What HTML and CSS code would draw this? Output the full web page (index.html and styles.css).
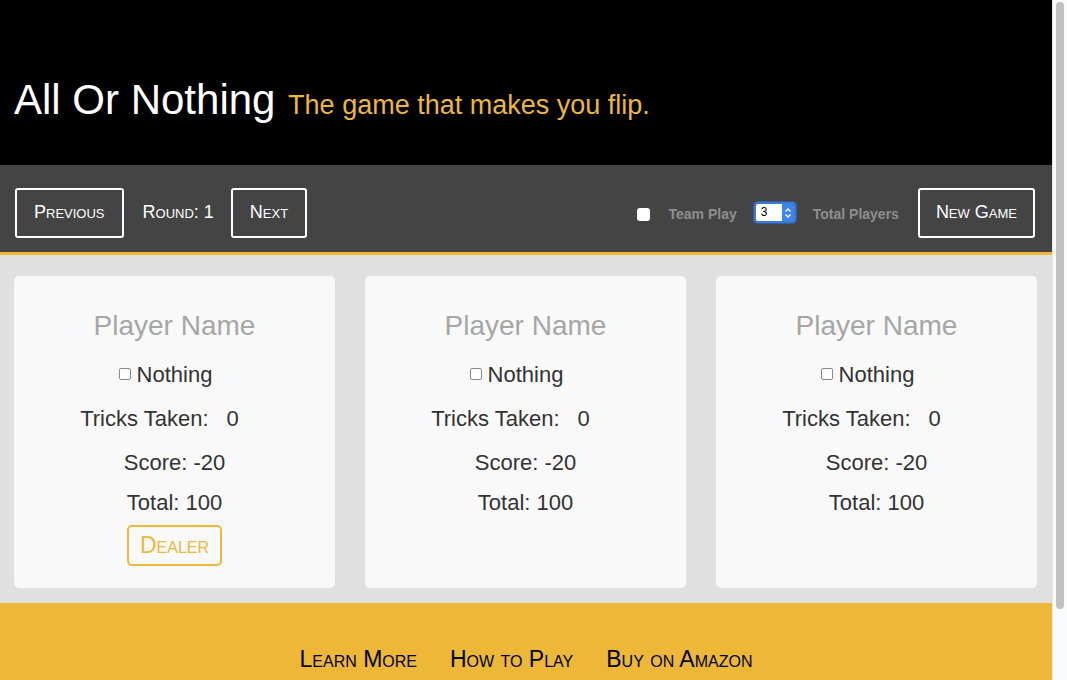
FILE: index.html
```html
<!DOCTYPE html>
<html>
<head>
<meta charset="utf-8">
<title>All Or Nothing</title>
<link rel="stylesheet" href="styles.css">
</head>
<body>
<div class="page">
<header class="hero">
  <h1 class="title">All Or Nothing <span class="tagline">The game that makes you flip.</span></h1>
</header>
<nav class="toolbar">
  <div class="round-nav">
    <button class="btn">Previous</button>
    <span class="round">Round: 1</span>
    <button class="btn">Next</button>
  </div>
  <div class="options">
    <span class="check-white"></span>
    <span class="opt-label team">Team Play</span>
    <span class="num-input"><span class="num-val">3</span><span class="stepper"><svg width="8" height="12" viewBox="0 0 8 12"><path d="M1.5 4.5 L4 2 L6.5 4.5 M1.5 7.5 L4 10 L6.5 7.5" fill="none" stroke="#fff" stroke-width="1.3"/></svg></span></span>
    <span class="opt-label">Total Players</span>
    <button class="btn btn-new">New Game</button>
  </div>
</nav>
<main class="board">
  <section class="card">
    <div class="name">Player Name</div>
    <div class="nothing"><span class="check-small"></span>Nothing</div>
    <div class="tricks">Tricks Taken: <span class="tricks-val">0</span></div>
    <div class="stat">Score: -20</div>
    <div class="stat total">Total: 100</div>
    <div class="dealer-row"><span class="dealer">Dealer</span></div>
  </section>
  <section class="card">
    <div class="name">Player Name</div>
    <div class="nothing"><span class="check-small"></span>Nothing</div>
    <div class="tricks">Tricks Taken: <span class="tricks-val">0</span></div>
    <div class="stat">Score: -20</div>
    <div class="stat total">Total: 100</div>
  </section>
  <section class="card">
    <div class="name">Player Name</div>
    <div class="nothing"><span class="check-small"></span>Nothing</div>
    <div class="tricks">Tricks Taken: <span class="tricks-val">0</span></div>
    <div class="stat">Score: -20</div>
    <div class="stat total">Total: 100</div>
  </section>
</main>
<footer class="footer">
  <a class="flink">Learn More</a>
  <a class="flink">How to Play</a>
  <a class="flink">Buy on Amazon</a>
</footer>
</div>
<div class="scrollbar"><div class="thumb"></div></div>
</body>
</html>
```
FILE: styles.css
```css
html, body {
  margin: 0;
  padding: 0;
  height: 100%;
  overflow: hidden;
}
body {
  font-family: "Liberation Sans", Arial, Helvetica, sans-serif;
  background: #e0e0e0;
  display: flex;
}
.page {
  flex: 1;
  min-width: 0;
  height: 100vh;
  overflow: hidden;
}
.scrollbar {
  width: 15px;
  box-sizing: border-box;
  flex: none;
  height: 100vh;
  background: #fafafa;
  border-left: 1px solid #e8e8e8;
  padding: 2px 3px 0 3px;
}
.thumb {
  height: 607px;
  background: #c1c1c1;
  border-radius: 4px;
}
.hero {
  background: #000;
  height: 165px;
  box-sizing: border-box;
  display: flex;
  align-items: flex-end;
  padding: 0 14px 36px;
}
.title {
  margin: 0;
  font-weight: normal;
  font-size: 42px;
  line-height: 48px;
  color: #fff;
  white-space: nowrap;
}
.tagline {
  font-size: 27px;
  color: #edb837;
  margin-left: 1px;
}
.toolbar {
  background: #444;
  height: 90px;
  box-sizing: border-box;
  padding: 8px 17px 0 15px;
  border-bottom: 3px solid #edb837;
  display: flex;
  align-items: center;
  justify-content: space-between;
}
.round-nav, .options {
  display: flex;
  align-items: center;
}
.btn {
  font-family: "Liberation Sans", Arial, sans-serif;
  font-variant: small-caps;
  font-size: 18px;
  color: #fff;
  background: transparent;
  border: 2px solid #fff;
  border-radius: 3px;
  height: 50px;
  padding: 0 17px;
  cursor: pointer;
}
.round {
  color: #fff;
  font-variant: small-caps;
  font-size: 18px;
  margin: 0 17px 0 19px;
}
.check-white {
  width: 13px;
  height: 13px;
  background: #fff;
  border-radius: 3px;
  margin-top: 4px;
}
.opt-label {
  color: #8f8f8f;
  font-weight: bold;
  font-size: 14px;
  margin-left: 17px;
  margin-top: 2px;
}
.team {
  margin-left: 19px;
}
.num-input {
  margin-left: 17px;
  display: flex;
  align-items: stretch;
  height: 17px;
  border: 2px solid #3d79cf;
  border-radius: 4px;
  background: #3d79cf;
  box-shadow: 0 0 0 1px #2f5fa8;
}
.num-val {
  background: #fff;
  width: 21px;
  font-size: 12px;
  line-height: 17px;
  padding-left: 5px;
  border-radius: 2px 0 0 2px;
}
.stepper {
  width: 12px;
  display: flex;
  align-items: center;
  justify-content: center;
  background: #3d84ef;
  border-radius: 0 2px 2px 0;
}
.btn-new {
  margin-left: 19px;
  padding: 0 16px;
}
.board {
  background: #e0e0e0;
  display: grid;
  grid-template-columns: repeat(3, 1fr);
  gap: 30px;
  padding: 21px 15px 15px 14px;
}
.card {
  background: #f9f9f9;
  border-radius: 5px;
  height: 312px;
  box-sizing: border-box;
  padding-top: 33px;
  text-align: center;
  color: #333;
  font-size: 22px;
}
.name {
  font-size: 28px;
  line-height: 34px;
  color: #a6a6a6;
}
.nothing {
  line-height: 30px;
  margin-top: 17px;
  padding-right: 18px;
  display: flex;
  justify-content: center;
  align-items: center;
}
.check-small {
  width: 10px;
  height: 10px;
  border: 1px solid #8a8a8a;
  border-radius: 2px;
  background: #fff;
  margin-right: 6px;
  margin-top: -3px;
}
.tricks {
  line-height: 30px;
  margin-top: 14px;
  padding-right: 30px;
}
.tricks-val {
  margin-left: 12px;
}
.stat {
  line-height: 30px;
  margin-top: 14px;
  padding-right: 0;
}
.total {
  margin-top: 10px;
}
.dealer-row {
  margin-top: 7px;
  display: flex;
  justify-content: center;
}
.dealer {
  display: inline-flex;
  align-items: center;
  justify-content: center;
  box-sizing: border-box;
  width: 95px;
  height: 41px;
  border: 2px solid #edb837;
  border-radius: 5px;
  color: #edb837;
  font-variant: small-caps;
  font-size: 23px;
}
.footer {
  background: #edb837;
  height: 159px;
  box-sizing: border-box;
  padding-top: 42px;
  display: flex;
  justify-content: center;
  gap: 33px;
}
.flink {
  color: #000;
  font-variant: small-caps;
  font-size: 23px;
  line-height: 28px;
  cursor: pointer;
}
```
